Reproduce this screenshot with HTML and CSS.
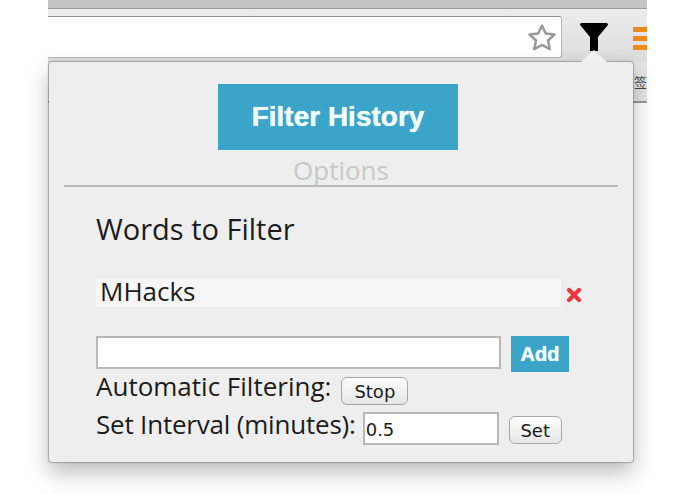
FILE: index.html
```html
<!DOCTYPE html>
<html lang="en">
<head>
    <meta charset="UTF-8">
    <title>Filter History</title>
    <link rel="stylesheet" href="styles.css">
</head>
<body>
    <div class="browser">
        <div class="tabStrip"></div>
        <div class="toolbar">
            <div class="omnibox">
                <svg class="star" width="30" height="30" viewBox="0 0 30 30">
                    <path d="M15 2.500l3.700 8 8.800 1-6.500 6 1.800 8.700-7.800-4.400-7.800 4.400 1.800-8.700-6.500-6 8.800-1z" fill="#fff" stroke="#9a9a9a" stroke-width="2.500" stroke-linejoin="round"/>
                </svg>
            </div>
            <svg class="funnel" width="28" height="28" viewBox="0 0 28 28">
                <path d="M1.500 0h25a1.500 1.500 0 0 1 1.200 2.300L18 14v14h-8V14L.3 2.300A1.500 1.500 0 0 1 1.500 0z" fill="#000"/>
            </svg>
            <div class="menuIcon">
                <span></span><span></span><span></span>
            </div>
        </div>
        <div class="bookmarks"><span class="bookmarkText">签</span></div>
    </div>

    <div class="popup">
        <div class="arrow"></div>
        <div class="top">
            <div class="titleBtn">Filter History</div>
            <div class="options">Options</div>
        </div>
        <div class="content">
            <h2>Words to Filter</h2>
            <div class="wordRow">
                <div class="word">MHacks</div>
                <svg class="remove" width="16" height="16" viewBox="0 0 16 16">
                    <path d="M3 3l10 10M13 3L3 13" stroke="#f0333c" stroke-width="4.200" stroke-linecap="round"/>
                </svg>
            </div>
            <div class="addRow">
                <input type="text" class="addInput">
                <button class="addBtn">Add</button>
            </div>
            <div class="autoRow">
                <span>Automatic Filtering:</span>
                <button class="smallBtn stopBtn">Stop</button>
            </div>
            <div class="intervalRow">
                <span>Set Interval (minutes):</span>
                <input type="text" class="intervalInput" value="0.5">
                <button class="smallBtn setBtn">Set</button>
            </div>
        </div>
    </div>
</body>
</html>
```

FILE: styles.css
```css
body{
    margin: 0;
    background-color: white;
    height: 494px;
    overflow: hidden;
    position: relative;
}
.browser{
    margin-left: 48px;
    width: 599px;
}
.tabStrip{
    height: 8px;
    background-color: #c5c5c5;
    border-bottom: 1px solid #9c9c9c;
}
.toolbar{
    display: flex;
    align-items: flex-start;
    height: 53px;
    padding-top: 7px;
    box-sizing: border-box;
    background: linear-gradient(#ececec, #dcdcdc);
}
.omnibox{
    width: 514px;
    height: 42px;
    box-sizing: border-box;
    background-color: white;
    border: 1px solid #b5b5b5;
    border-left: none;
    border-top-color: #8f8f8f;
    border-radius: 0 3px 3px 0;
    display: flex;
    justify-content: flex-end;
    align-items: center;
    padding: 2px 4px 0 0;
}
.funnel{
    margin: 7px 0 0 18px;
}
.menuIcon{
    margin: 11px 0 0 25px;
    width: 14px;
    display: flex;
    flex-direction: column;
    gap: 4px;
}
.menuIcon span{
    height: 5px;
    background-color: #ee8a1c;
}
.bookmarks{
    height: 39px;
    background-color: #e4e4e4;
    border-bottom: 2px solid #9a9a9a;
    display: flex;
    justify-content: flex-end;
    align-items: center;
}
.bookmarkText{
    font-family: "Noto Sans CJK SC", sans-serif;
    font-size: 13px;
    color: #444;
}
.popup{
    position: absolute;
    left: 49px;
    top: 62px;
    width: 584px;
    height: 400px;
    box-sizing: border-box;
    background-color: #eeeeee;
    border-radius: 3px;
    box-shadow: 0 0 1px 1px rgba(120,120,120,.55), 0 10px 22px rgba(0,0,0,.28);
    font-family: "Open Sans", sans-serif;
    color: #1c1c1c;
}
.arrow{
    position: absolute;
    left: 532px;
    top: -12px;
    border-left: 13px solid transparent;
    border-right: 13px solid transparent;
    border-bottom: 12px solid #f2f2f2;
}
.top{
    margin: 0 15px;
    padding-top: 22px;
    height: 125px;
    box-sizing: border-box;
    border-bottom: 2px solid #b9b9b9;
    display: flex;
    flex-direction: column;
    align-items: center;
}
.titleBtn{
    width: 240px;
    height: 66px;
    flex-shrink: 0;
    margin-right: 6px;
    background-color: #3ba4c9;
    color: #f2ffff;
    font-family: "Liberation Sans", sans-serif;
    font-weight: bold;
    font-size: 28px;
    text-shadow: 0 0 1px #f2ffff;
    display: flex;
    justify-content: center;
    align-items: center;
}
.options{
    font-size: 26px;
    line-height: 30px;
    margin-top: 5px;
    color: #c8c8c8;
}
.content{
    padding: 24px 0 0 47px;
}
h2{
    margin: 0;
    font-weight: normal;
    font-size: 29px;
    line-height: 36px;
}
.wordRow{
    display: flex;
    align-items: center;
    margin-top: 32px;
}
.word{
    width: 465px;
    height: 28px;
    line-height: 25px;
    padding-left: 4px;
    box-sizing: border-box;
    background-color: #f6f6f6;
    font-size: 26px;
}
.remove{
    margin: 3px 0 0 5px;
}
.addRow{
    display: flex;
    align-items: flex-start;
    margin-top: 29px;
}
.addInput{
    width: 405px;
    height: 33px;
    box-sizing: border-box;
    border: 2px solid #b8b8b8;
    background-color: white;
    margin: 0;
}
.addBtn{
    margin-left: 10px;
    width: 58px;
    height: 36px;
    border: none;
    padding: 0;
    background-color: #3ba4c9;
    color: #f2ffff;
    font-family: "Liberation Sans", sans-serif;
    font-weight: bold;
    font-size: 20px;
    text-shadow: 0 0 1px #f2ffff;
}
.autoRow{
    display: flex;
    align-items: flex-start;
    font-size: 26px;
    line-height: 32px;
    margin-top: -2px;
}
.intervalRow{
    display: flex;
    align-items: flex-start;
    font-size: 26px;
    letter-spacing: -0.2px;
    line-height: 24px;
    margin-top: 7px;
}
.smallBtn{
    height: 28px;
    padding: 0;
    box-sizing: border-box;
    background: linear-gradient(#fdfdfd, #e6e6e6);
    border: 1px solid #a8a8a8;
    border-radius: 6px;
    font-family: "DejaVu Sans", sans-serif;
    font-size: 18px;
    color: #1c1c1c;
}
.stopBtn{
    width: 67px;
    margin: 7px 0 0 10px;
}
.setBtn{
    width: 53px;
    margin: 4px 0 0 10px;
}
.intervalInput{
    width: 136px;
    height: 33px;
    box-sizing: border-box;
    border: 2px solid #b8b8b8;
    background-color: white;
    margin: 0 0 0 7px;
    padding: 2px 1px 0;
    font-family: "DejaVu Sans", sans-serif;
    font-size: 18px;
    color: #1c1c1c;
}
```
